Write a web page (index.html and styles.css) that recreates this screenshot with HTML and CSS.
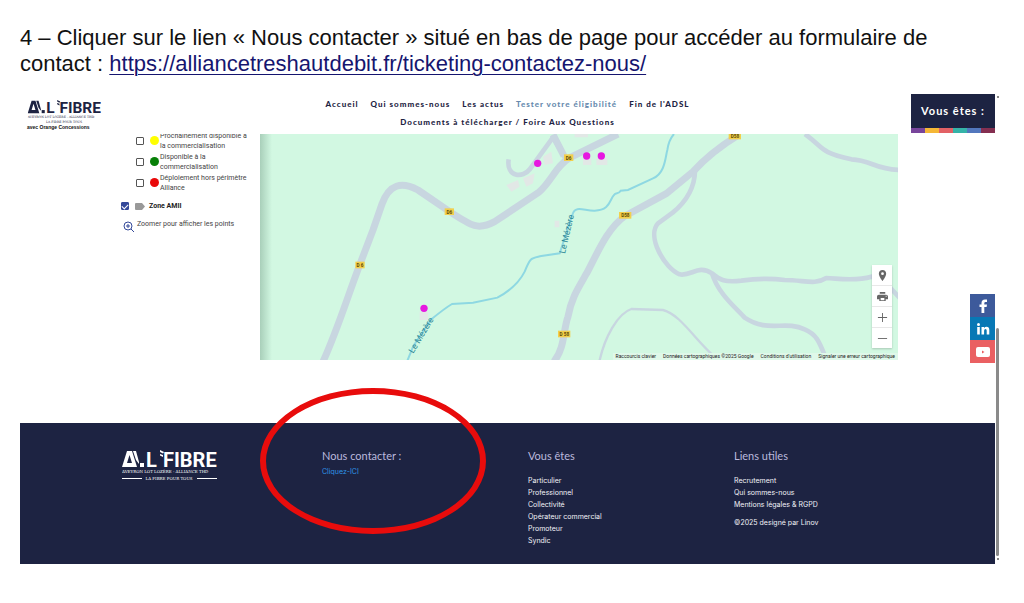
FILE: index.html
```html
<!DOCTYPE html>
<html lang="fr">
<head>
<meta charset="utf-8">
<title>Nous contacter</title>
<link rel="stylesheet" href="styles.css">
</head>
<body>
<svg class="defs" aria-hidden="true">
  <symbol id="logo" viewBox="0 0 95 31">
    <g fill="currentColor">
      <path fill-rule="evenodd" d="M0 17 5 1H10L15 17ZM5 13H10L7.500 5Z"/>
      <path d="M11 1H14L17 12V14L14 10Z"/>
      <rect x="18" y="13" width="4" height="4"/>
      <path d="M38 0 42 2 41 3.500 38 2ZM38 4 41 5V7L38 5.500Z"/>
      <g class="logo-word">
        <text x="24" y="17">L</text>
        <text x="41" y="17">FIBRE</text>
      </g>
      <text class="logo-line" x="0" y="23">AVEYRON LOT LOZÈRE - ALLIANCE THD</text>
      <text class="logo-line" x="47" y="30" text-anchor="middle">LA FIBRE POUR TOUS</text>
      <path class="logo-rules" d="M0 28H20V29H0ZM75 28H95V29H75Z"/>
    </g>
  </symbol>
</svg>
<main class="sheet">
  <p class="instruction">4 – Cliquer sur le lien « Nous contacter » situé en bas de page pour accéder au formulaire de contact : <a href="https://alliancetreshautdebit.fr/ticketing-contactez-nous/">https://alliancetreshautdebit.fr/ticketing-contactez-nous/</a></p>

  <div class="capture">
    <div class="site">
      <header class="header">
        <div class="brand">
          <svg class="brand-logo" viewBox="0 0 95 31" role="img" aria-label="All'Fibre"><use href="#logo"/></svg>
          <span class="brand-note">avec Orange Concessions</span>
        </div>
        <nav class="nav">
          <a href="#">Accueil</a>
          <a href="#">Qui sommes-nous</a>
          <a href="#">Les actus</a>
          <a href="#" class="current">Tester votre éligibilité</a>
          <a href="#">Fin de l'ADSL</a>
          <a href="#">Documents à télécharger / Foire Aux Questions</a>
        </nav>
        <button class="profile" type="button">
          <span class="profile-label">Vous êtes :</span>
          <span class="stripe"><i></i><i></i><i></i><i></i><i></i><i></i></span>
        </button>
      </header>

      <section class="explorer">
        <form class="legend">
          <label class="layer"><input type="checkbox"><i class="dot yellow"></i><span>Prochainement disponible à la commercialisation</span></label>
          <label class="layer"><input type="checkbox"><i class="dot green"></i><span>Disponible à la commercialisation</span></label>
          <label class="layer"><input type="checkbox"><i class="dot red"></i><span>Déploiement hors périmètre Alliance</span></label>
          <label class="zone"><input type="checkbox" checked><svg class="tag" viewBox="0 0 10 7"><path d="M1 0H7L10 3.500 7 7H1Q0 7 0 6V1Q0 0 1 0Z"/></svg><span>Zone AMII</span></label>
          <p class="hint"><svg viewBox="0 0 12 12"><circle cx="5" cy="5" r="4"/><path d="M8 8 11 11M3 5H7M5 3V7"/></svg><span>Zoomer pour afficher les points</span></p>
        </form>

        <div class="map">
          <svg class="map-canvas" viewBox="0 0 1914 678" preserveAspectRatio="xMidYMid slice" role="img" aria-label="Carte">
            <g transform="translate(-6 -12)">
              <g class="houses"><path d="M745 165 780 150 785 170 760 185ZM795 145 830 130 825 160 805 170ZM855 80 880 65 885 100 860 105ZM890 272h14v20h-14ZM950 12H990V22H950ZM485 545h25v25h-25ZM975 85H1000V105H975ZM1015 85H1048V105H1015Z"/></g>
              <g class="road">
                <path class="main-road" d="M195 695C240 595 265 510 305 405L345 300 372 222C394 162 430 154 480 180L575 245C640 288 660 302 710 275L842 187C880 155 895 105 936 83L1080 12"/>
                <path d="M752 88C744 142 795 145 816 117L885 22 922 85"/>
                <path class="main-road" d="M885 14 918 78M888 695C922 650 915 600 930 560 940 505 960 475 986 430 1018 370 1048 295 1101 258L1226 190 1306 124Q1360 65 1440 16"/>
                <path d="M1311 122C1310 180 1278 220 1244 248L1200 280C1165 320 1220 415 1265 433 1300 440 1320 402 1362 430 1386 450 1400 458 1450 452Q1520 442 1580 450C1640 450 1670 466 1705 444 1740 445 1790 455 1840 440L1870 444 1925 504"/>
                <path d="M1362 430C1380 490 1430 530 1460 563 1530 610 1580 570 1640 598 1680 615 1685 640 1708 695"/>
                <path d="M1641 12C1700 55 1680 65 1780 88 1840 90 1850 118 1925 120"/>
                <path class="lane" d="M1024 695C1040 620 1080 550 1120 537L1215 540C1270 555 1310 630 1375 685"/>
              </g>
              <path class="river" d="M447 695 466 648 520 568Q560 535 582 522L645 518 718 503C770 475 790 445 800 425 818 380 820 385 850 378L905 370 944 252C952 225 980 243 1010 242 1055 242 1055 210 1067 196 1075 185 1080 195 1088 182L1110 180 1185 145C1222 130 1222 80 1228 60Q1232 30 1248 12"/>
              <g class="badges">
                <rect x="292" y="395" width="28" height="20"/><rect x="560" y="235" width="28" height="20"/>
                <rect x="918" y="73" width="28" height="20"/><rect x="900" y="602" width="37" height="20"/>
                <rect x="1083" y="246" width="37" height="20"/><rect x="1412" y="8" width="37" height="20"/>
              </g>
              <g class="codes">
                <text x="306" y="411">D 6</text><text x="574" y="251">D6</text><text x="932" y="89">D6</text>
                <text x="919" y="618">D 58</text><text x="1102" y="262">D58</text><text x="1431" y="24">D58</text>
              </g>
              <g class="river-name">
                <text transform="translate(466 671) rotate(-59)">Le Mézère</text>
                <text transform="translate(921 372) rotate(-77)">Le Mézère</text>
              </g>
              <g class="pins"><circle cx="498" cy="535" r="11"/><circle cx="839" cy="100" r="11"/><circle cx="986" cy="78" r="11"/><circle cx="1030" cy="78" r="11"/></g>
            </g>
          </svg>
          <div class="map-tools">
            <button type="button" aria-label="Ma position"><svg viewBox="0 0 12 12"><path fill-rule="evenodd" d="M6 0C3.500 0 2 1.800 2 4c0 3 4 8 4 8s4-5 4-8C10 1.800 8.500 0 6 0ZM6 2.500a1.500 1.500 0 1 1 0 3 1.500 1.500 0 0 1 0-3Z"/></svg></button>
            <button type="button" aria-label="Imprimer"><svg viewBox="0 0 12 12"><path fill-rule="evenodd" d="M3 1H9V3H3ZM2 4H10Q12 4 12 6V9H9.500V11H2.500V9H0V6Q0 4 2 4ZM4 7.500V10H8V7.500ZM9.500 5.200V6.300H10.500V5.200Z"/></svg></button>
            <button type="button" aria-label="Zoom avant"><svg viewBox="0 0 12 12"><path d="M5.500 1H6.500V5.500H11V6.500H6.500V11H5.500V6.500H1V5.500H5.500Z"/></svg></button>
            <button type="button" aria-label="Zoom arrière"><svg viewBox="0 0 12 12"><path d="M1 5.500H11V6.500H1Z"/></svg></button>
          </div>
          <div class="credits"><a href="#">Raccourcis clavier</a><span>Données cartographiques ©2025 Google</span><a href="#">Conditions d'utilisation</a><a href="#">Signaler une erreur cartographique</a></div>
        </div>
      </section>

      <footer class="footer">
        <svg class="footer-logo" viewBox="0 0 95 31" role="img" aria-label="All'Fibre"><use href="#logo"/></svg>
        <section class="contact">
          <h2>Nous contacter :</h2>
          <a href="#">Cliquez-ICI</a>
          <span class="highlight"></span>
        </section>
        <section>
          <h2>Vous êtes</h2>
          <ul>
            <li><a href="#">Particulier</a></li>
            <li><a href="#">Professionnel</a></li>
            <li><a href="#">Collectivité</a></li>
            <li><a href="#">Opérateur commercial</a></li>
            <li><a href="#">Promoteur</a></li>
            <li><a href="#">Syndic</a></li>
          </ul>
        </section>
        <section>
          <h2>Liens utiles</h2>
          <ul>
            <li><a href="#">Recrutement</a></li>
            <li><a href="#">Qui sommes-nous</a></li>
            <li><a href="#">Mentions légales &amp; RGPD</a></li>
          </ul>
          <p class="copyright">©2025 designé par Linov</p>
        </section>
      </footer>

      <div class="social">
        <a class="facebook" href="#" aria-label="Facebook"><svg viewBox="0 0 14 14"><path d="M5.500 14V8H3.500V5.500H5.500V4Q5.500 .5 9 .5H11V3H9.500Q8.300 3 8.300 4.200V5.500H11L10.600 8H8.300V14Z"/></svg></a>
        <a class="linkedin" href="#" aria-label="LinkedIn"><svg viewBox="0 0 14 14"><circle cx="2.500" cy="2.500" r="1.500"/><path d="M1.200 5H3.800V12.500H1.200ZM5.500 5H8V6Q9 4.800 10.500 4.800 13.300 4.800 13.300 8V12.500H10.700V8.500Q10.700 7 9.500 7 8.100 7 8.100 8.700V12.500H5.500Z"/></svg></a>
        <a class="youtube" href="#" aria-label="YouTube"><svg viewBox="0 0 14 14"><path fill-rule="evenodd" d="M2 2H12Q14 2 14 4V10Q14 12 12 12H2Q0 12 0 10V4Q0 2 2 2ZM6 5.500V8.500L8.500 7Z"/></svg></a>
      </div>
    </div>
    <div class="scrollbar"><i class="arrow"></i><i class="thumb"></i><i class="arrow"></i></div>
  </div>
</main>
</body>
</html>
```
FILE: styles.css
```css
* { box-sizing: border-box; }
body { margin: 0; background: #fff; font-family: Lato, sans-serif; color: #1d2342; }
h2, p, ul { margin: 0; padding: 0; }
ul { list-style: none; }
a { color: inherit; text-decoration: none; }
button { border: 0; padding: 0; font: inherit; }
.defs { position: absolute; width: 0; height: 0; }

.sheet { padding: 25px 24px 38px 20px; }
.instruction { padding-right: 30px; color: #111; font: 22px/26px "Liberation Sans", sans-serif; }
.instruction a { color: #15156f; text-decoration: underline; text-decoration-thickness: 1px; text-underline-offset: 3px; }

.capture { display: flex; margin-top: 17px; }
.site { position: relative; flex: 1; }

.header { display: grid; grid-template-columns: 1fr 400px 1fr; align-items: start; height: 40px; }
.brand { padding: 6px 0 0 7px; }
.brand-logo { display: block; width: 75px; height: 24px; --rules: 0; }
.brand-note { display: block; color: #111; font: bold 5px/6px "Liberation Sans", sans-serif; }
.logo-word { font: bold 20px Roboto, sans-serif; }
.logo-line { font: 4px "DejaVu Serif", serif; }
.logo-rules { opacity: var(--rules, 1); }
.nav { display: flex; flex-wrap: wrap; justify-content: center; column-gap: 12px; padding-top: 1px; font-size: 8px; font-weight: 900; line-height: 18px; letter-spacing: 1px; }
.nav .current { color: #6689ad; }
.profile { justify-self: end; width: 84px; background: #1d2342; color: #fff; font-size: 11px; font-weight: bold; letter-spacing: 1px; }
.profile-label { display: block; line-height: 34px; }
.stripe { display: flex; height: 5px; }
.stripe i { flex: 1; background: #78459b; }
.stripe i:nth-child(2) { background: #f5b736; }
.stripe i:nth-child(3) { background: #e26165; }
.stripe i:nth-child(4) { background: #35b3a8; }
.stripe i:nth-child(5) { background: #5277bd; }
.stripe i:nth-child(6) { background: #842f50; }

.explorer { display: flex; height: 226px; padding-right: 97px; }
.legend { display: flex; flex: 0 0 240px; flex-direction: column; justify-content: flex-end; overflow: hidden; padding: 0 8px 127px 101px; color: #444; font: 7px/10px Roboto, sans-serif; }
.layer { display: flex; flex: none; align-items: center; height: 21px; padding-left: 15px; }
.layer span { flex: 1; }
.legend input { appearance: none; flex: none; width: 8px; height: 8px; margin: 0; border: 1px solid #555; border-radius: 1px; background: #fff; }
.legend input:checked { display: flex; justify-content: center; border-color: #34499a; background: #34499a; }
.legend input:checked::before { content: ""; width: 3px; height: 5px; border: solid #fff; border-width: 0 1px 1px 0; transform: rotate(45deg); }
.dot { flex: none; width: 9px; height: 9px; margin: 0 1px 0 6px; border-radius: 50%; }
.yellow { background: #ff0; }
.green { background: #078007; }
.red { background: #e90909; }
.zone { display: flex; flex: none; align-items: center; height: 26px; color: #222; font-weight: bold; }
.tag { width: 10px; height: 7px; margin: 0 4px 0 6px; fill: #999; }
.hint { display: flex; flex: none; gap: 2px; }
.hint svg { width: 12px; height: 12px; margin: 2px 0 0 2px; fill: none; stroke: #34499a; stroke-width: 1; }

.map { position: relative; flex: 1; overflow: hidden; background: #d2f8e2; }
.map::before { content: ""; position: absolute; inset: 0 auto 0 0; width: 12px; background: linear-gradient(90deg, #a9cfba, transparent); }
.map-canvas { display: block; width: 100%; height: 100%; }
.houses { fill: #e2e8e6; }
.road { fill: none; stroke: #c8d6e0; stroke-width: 14; stroke-linejoin: round; }
.main-road { stroke-width: 21; }
.lane { stroke-width: 7; }
.river { fill: none; stroke: #8ed8e2; stroke-width: 6; }
.badges { fill: #f2cf4c; }
.codes { fill: #5c4c08; font: bold 14px Roboto, sans-serif; text-anchor: middle; }
.river-name { fill: #2b8796; font: 26px Roboto, sans-serif; }
.pins { fill: #e619e0; }
.map-tools { position: absolute; right: 6px; bottom: 12px; display: flex; flex-direction: column; width: 20px; background: #fff; box-shadow: 0 1px 2px #0003; }
.map-tools button { display: flex; align-items: center; justify-content: center; height: 21px; background: #fff; border-bottom: 1px solid #e8e8e8; }
.map-tools button:last-child { height: 20px; border: 0; }
.map-tools svg { width: 11px; height: 11px; fill: #666; }
.credits { position: absolute; right: 0; bottom: 0; display: flex; gap: 7px; padding: 0 3px; background: #dff8e9; color: #222; font: 5px/7px Roboto, sans-serif; white-space: nowrap; }

.footer { display: grid; grid-template-columns: 200fr 206fr 206fr 261fr; margin-top: 63px; padding: 25px 0 17px 102px; background: #1d2342; color: #f2f2f8; font: 7px/12px Inter, sans-serif; }
.footer-logo { width: 95px; height: 31px; margin-top: 2px; color: #fff; }
.footer h2 { color: #bbb9dd; font: 11px/15px Lato, sans-serif; }
.footer ul { margin-top: 12px; }
.copyright { margin-top: 6px; }
.contact { position: relative; }
.contact a { display: block; margin-top: 3px; color: #2e93e8; }
.highlight { position: absolute; top: -60px; left: -62px; width: 226px; height: 146px; border: 6px solid #e80c0c; border-radius: 50%; pointer-events: none; }

.social { position: absolute; top: 200px; right: 0; width: 25px; }
.social a { display: flex; align-items: center; justify-content: center; height: 23px; }
.social svg { width: 14px; height: 14px; fill: #fff; }
.facebook { background: #3d5a9b; }
.linkedin { background: #0878b5; }
.youtube { background: #ea6062; }

.scrollbar { display: flex; flex-direction: column; align-items: center; width: 5px; padding: 2px 0 4px; }
.arrow { width: 2px; height: 2px; background: #888; }
.thumb { width: 3px; height: 228px; margin: auto 0 2px; border-radius: 2px; background: #8a8a8a; }
```
